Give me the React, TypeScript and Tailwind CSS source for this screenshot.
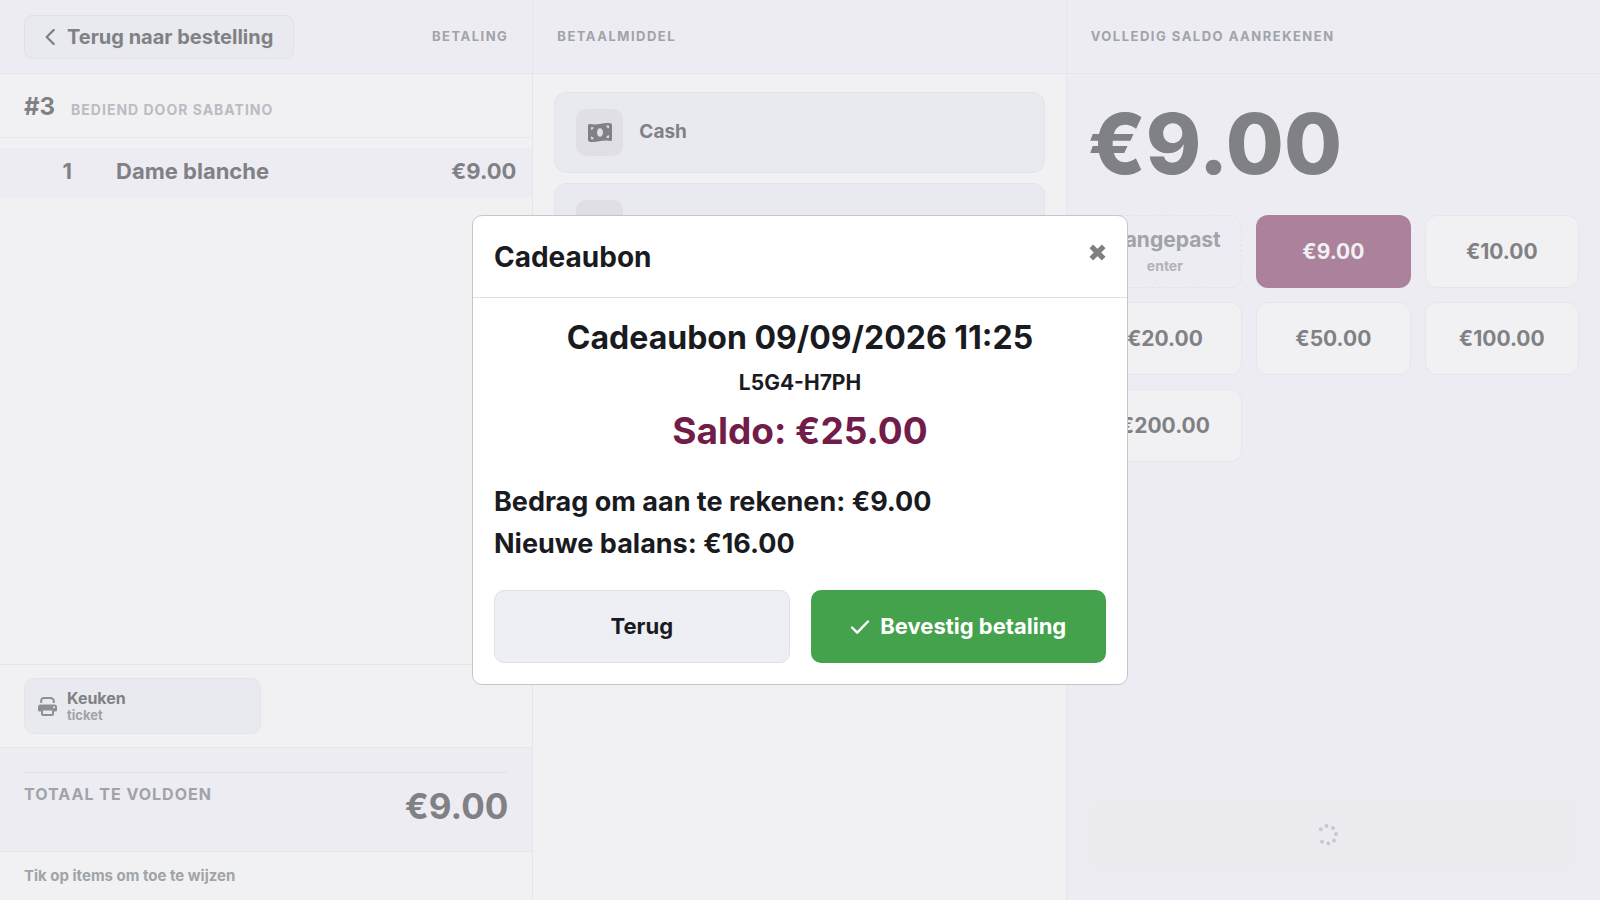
import React from "react";

const presets = ["€9.00", "€10.00", "€20.00", "€50.00", "€100.00", "€200.00"];

const label = "text-[13px] leading-[18px] pb-[2px] font-bold uppercase tracking-[1.5px] text-[#a0a3a8]";

function ChevronIcon() {
  return (
    <svg width="10" height="18" viewBox="0 0 10 18" fill="none" stroke="currentColor" strokeWidth="2.3" strokeLinecap="round" strokeLinejoin="round" aria-hidden="true">
      <path d="M8.700 2 1.700 9l7 7" />
    </svg>
  );
}

function CloseIcon() {
  return (
    <svg width="17" height="17" viewBox="0 0 17 17" stroke="currentColor" strokeWidth="5.200" aria-hidden="true">
      <path d="M2.300 2.300 14.700 14.700M14.700 2.300 2.300 14.700" />
    </svg>
  );
}

function CheckIcon() {
  return (
    <svg width="20" height="16" viewBox="0 0 20 16" fill="none" stroke="currentColor" strokeWidth="2.4" strokeLinecap="round" strokeLinejoin="round" aria-hidden="true">
      <path d="M2 8.500 7.200 13.700 18 2.500" />
    </svg>
  );
}

function CashIcon() {
  return (
    <svg width="24" height="20" viewBox="0 0 24 20" aria-hidden="true">
      <path fill="currentColor" fillRule="evenodd" d="M0 2.600C0 1.500.9.900 2 1.100 8.500 2.300 14 .2 18.500 0c2-.1 3.500.1 4.600.500.6.2.9.800.9 1.400v14.500c0 1.100-.9 1.700-2 1.500C15.500 16.700 10 18.800 5.500 19c-2 .1-3.500-.1-4.600-.500-.6-.2-.9-.8-.9-1.400ZM12 5.200c-1.700 0-3 1.900-3 4.300s1.300 4.300 3 4.300 3-1.900 3-4.300-1.300-4.300-3-4.300ZM3 4.200v2.600c1.500 0 2.700-1.100 2.700-2.500ZM3 16.300h2.700C5.700 14.700 4.500 13.600 3 13.600ZM21 2.600h-2.700c0 1.500 1.200 2.700 2.700 2.700ZM21 15v-2.700c-1.500 0-2.700 1-2.700 2.400Z" />
    </svg>
  );
}

function PrinterIcon() {
  return (
    <svg width="19" height="19" viewBox="0 0 19 19" className="text-[#8e8f94]" aria-hidden="true">
      <path d="M3.200 6V3.500A2.500 2.500 0 0 1 5.700 1h7a2.500 2.500 0 0 1 1.800.8l.700.700c.4.400.6.800.6 1.300V6" fill="none" stroke="currentColor" strokeWidth="2" />
      <path fill="currentColor" fillRule="evenodd" d="M2.500 7.500h14A2.500 2.500 0 0 1 19 10v3a1.500 1.500 0 0 1-1.500 1.500H16V17a2 2 0 0 1-2 2H5a2 2 0 0 1-2-2v-2.500H1.500A1.500 1.500 0 0 1 0 13v-3a2.500 2.500 0 0 1 2.500-2.500ZM5 13.500V17h9v-3.500Zm11-4.300a1 1 0 1 0 0 2 1 1 0 0 0 0-2Z" />
    </svg>
  );
}

function Spinner() {
  return (
    <svg width="22" height="22" viewBox="0 0 22 22" fill="currentColor" aria-hidden="true">
      <circle cx="9.500" cy="2" r="2" />
      <circle cx="16" cy="4" r="2" />
      <circle cx="19" cy="10" r="2" />
      <circle cx="17" cy="16.500" r="2" />
      <circle cx="11.300" cy="19.500" r="2" />
      <circle cx="5" cy="17.700" r="2" />
      <circle cx="3.800" cy="5.300" r="2" />
    </svg>
  );
}

function OrderColumn() {
  return (
    <section className="flex flex-col min-w-0 border-r border-[#e6e5ec]">
      <header className="h-[74px] flex items-center justify-between px-6 bg-[#edecf2] border-b border-[#e6e5ec]">
        <button className="h-11 flex items-center gap-3 px-5 rounded-lg border border-[#e1e2e6] bg-[#e9eaef] text-xl font-bold">
          <ChevronIcon />
          Terug naar bestelling
        </button>
        <span className={label}>Betaling</span>
      </header>

      <div className="h-16 flex items-baseline gap-4 px-6 pt-[17px] border-b border-[#e8e8ec]">
        <h1 className="text-2xl leading-8 font-bold">#3</h1>
        <span className="text-sm font-bold uppercase tracking-[1px] text-[#b9bcc3]">Bediend door Sabatino</span>
      </div>

      <div className="mt-[10px] h-[50px] flex items-center pr-4 pb-1 bg-[#edecf2] text-[22px] font-bold">
        <span className="w-[72px] text-right">1</span>
        <span className="flex-1 pl-11">Dame blanche</span>
        <span>€9.00</span>
      </div>

      <div className="mt-auto h-[83px] px-6 pt-[13px] border-t border-[#e6e6ea]">
        <button className="w-[237px] h-14 flex items-center gap-[10px] px-[13px] rounded-[10px] border border-[#e4e3ea] bg-[#e9eaef] text-left">
          <PrinterIcon />
          <span className="flex flex-col">
            <span className="text-base leading-[18px] font-bold">Keuken</span>
            <span className="text-[13px] leading-4 font-bold text-[#a0a3a8]">ticket</span>
          </span>
        </button>
      </div>

      <div className="h-[105px] px-6 pt-6 bg-[#edecf2] border-y border-[#e6e5ec]">
        <div className="flex justify-between pt-[11px] border-t border-[#e1e1e6]">
          <span className="text-base leading-5 font-bold uppercase tracking-[1px] text-[#a0a3a8]">Totaal te voldoen</span>
          <span className="text-[35px] leading-[44px] font-bold">€9.00</span>
        </div>
      </div>
      <p className="h-12 px-6 flex items-center text-[15px] font-bold text-[#a0a3a8]">Tik op items om toe te wijzen</p>
    </section>
  );
}

function MethodColumn() {
  return (
    <section className="flex flex-col min-w-0 border-r border-[#e6e5ec]">
      <header className="h-[74px] flex items-center px-6 bg-[#edecf2] border-b border-[#e6e5ec]">
        <h2 className={label}>Betaalmiddel</h2>
      </header>
      <div className="flex flex-col gap-[10px] px-[21px] pt-[18px]">
        <button className="h-[81px] flex items-center gap-4 px-[21px] rounded-xl border border-[#e4e3ea] bg-[#e9eaef] text-[19px] font-bold">
          <span className="size-[47px] flex items-center justify-center rounded-[10px] bg-[#e0dfe5]">
            <CashIcon />
          </span>
          Cash
        </button>
        <button aria-label="Cadeaubon" className="h-[81px] flex items-center px-[21px] rounded-xl border border-[#e4e3ea] bg-[#e9eaef]">
          <span className="size-[47px] rounded-[10px] bg-[#e0dfe5]" />
        </button>
      </div>
    </section>
  );
}

function AmountColumn() {
  return (
    <section className="flex flex-col min-w-0 bg-[#edecf2]">
      <header className="h-[74px] flex items-center px-6 border-b border-[#e6e5ec]">
        <h2 className={label}>Volledig saldo aanrekenen</h2>
      </header>
      <p className="px-[21px] pt-6 text-[84px] leading-[92px] font-extrabold">€9.00</p>
      <div className="grid grid-cols-3 gap-[14px] px-[21px] pt-[25px]">
        <button className="h-[73px] rounded-xl border border-dashed border-[#e1e1e6] text-[#a0a3a8]">
          <span className="block text-[21px] leading-7 font-bold">Aangepast</span>
          <span className="block text-sm leading-6 font-bold text-[#b0b2b7]">enter</span>
        </button>
        {presets.map((amount, i) => (
          <button
            key={amount}
            className={
              i === 0
                ? "h-[73px] rounded-xl bg-[#ac819b] text-[#f1f1f4] text-[21px] font-bold"
                : "h-[73px] rounded-xl border border-[#e6e5ec] bg-[#f1f1f4] text-[21px] font-bold"
            }
          >
            {amount}
          </button>
        ))}
      </div>
      <button disabled aria-label="Bezig" className="mt-auto mx-[21px] mb-7 h-[75px] flex items-center justify-center pr-[10px] rounded-xl bg-[#ecebf0] text-[#c9c8ce]">
        <Spinner />
      </button>
    </section>
  );
}

function VoucherModal() {
  return (
    <div className="fixed inset-0 flex items-center justify-center">
      <div role="dialog" aria-modal="true" aria-labelledby="modal-title" className="w-[656px] rounded-[10px] border border-[#c6c6c9] bg-white text-[#1a1b1f] font-bold">
        <div className="h-[82px] flex items-center justify-between px-[21px] border-b border-[#dfdfe2]">
          <h2 id="modal-title" className="text-[28px] leading-8">Cadeaubon</h2>
          <button aria-label="Sluiten" className="text-[#808080] pb-2">
            <CloseIcon />
          </button>
        </div>
        <div className="px-[21px] pt-[18px] pb-[21px]">
          <div className="text-center">
            <h3 className="text-[32px] leading-[44px]">Cadeaubon 09/09/2026 11:25</h3>
            <p className="text-[21px] leading-[46px]">L5G4-H7PH</p>
            <p className="text-[37px] leading-[50px] text-[#721c4a]">Saldo: €25.00</p>
          </div>
          <div className="pt-[25px] text-[27px] leading-[42px]">
            <p>Bedrag om aan te rekenen: €9.00</p>
            <p>Nieuwe balans: €16.00</p>
          </div>
          <div className="grid grid-cols-2 gap-[21px] pt-[25px] text-[22px]">
            <button className="h-[73px] rounded-[10px] border border-[#e0e1e5] bg-[#eeeff4]">Terug</button>
            <button className="h-[73px] flex items-center justify-center gap-[10px] rounded-[10px] bg-[#45a24c] text-white">
              <CheckIcon />
              Bevestig betaling
            </button>
          </div>
        </div>
      </div>
    </div>
  );
}

export default function App() {
  return (
    <div className="font-['Inter',sans-serif] text-[#808184] bg-[#f1f1f4]">
      <main className="min-h-screen grid grid-cols-3">
        <OrderColumn />
        <MethodColumn />
        <AmountColumn />
      </main>
      <VoucherModal />
    </div>
  );
}
